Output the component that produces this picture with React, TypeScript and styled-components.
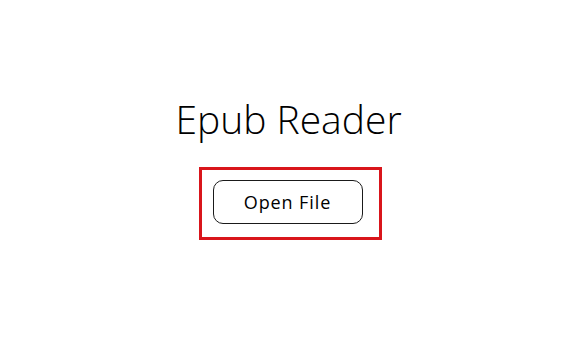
import styled, { createGlobalStyle } from 'styled-components'

const GlobalStyle = createGlobalStyle`
  html, body {
    margin: 0;
    padding: 0;
    background: #ffffff;
  }
  body {
    font-family: "Open Sans", "Noto Sans", sans-serif;
    color: #000000;
  }
`

const Page = styled.div`
  width: 568px;
  height: 355px;
  display: flex;
  flex-direction: column;
  align-items: center;
  padding-top: 92px;
  padding-left: 12px;
  box-sizing: border-box;
`

const Title = styled.h1`
  margin: 0 0 0 -3px;
  font-size: 39px;
  font-weight: 300;
  line-height: 54px;
  letter-spacing: 0;
`

const Highlight = styled.div`
  margin-top: 21px;
  border: 3px solid #d9151b;
  padding: 10px 16px 13px 11px;
  display: flex;
`

const OpenButton = styled.button`
  width: 150px;
  height: 44px;
  border: 1px solid #1a1a1a;
  border-radius: 10px;
  background: #ffffff;
  font-family: "Open Sans", "Noto Sans", sans-serif;
  font-size: 18px;
  letter-spacing: 0.9px;
  color: #000000;
  cursor: pointer;
`

export default function App() {
  return (
    <>
      <GlobalStyle />
      <Page>
        <Title>Epub Reader</Title>
        <Highlight>
          <OpenButton>Open File</OpenButton>
        </Highlight>
      </Page>
    </>
  )
}
